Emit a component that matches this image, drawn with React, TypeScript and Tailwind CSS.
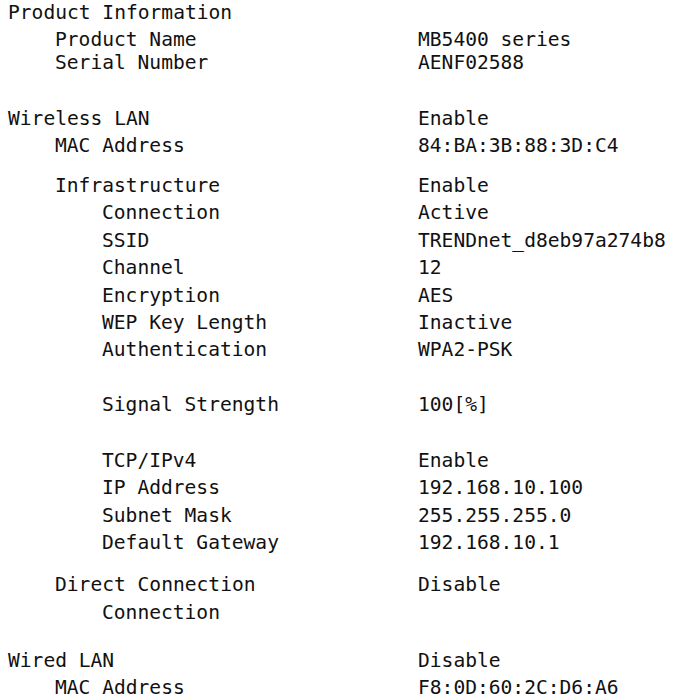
type Row = { label: string; value?: string; level: number; h: number };

// printed status sheet: label column + value column, heights = distance to next line
const rows: Row[] = [
  { label: "Product Information", level: 0, h: 27 },
  { label: "Product Name", value: "MB5400 series", level: 1, h: 23 },
  { label: "Serial Number", value: "AENF02588", level: 1, h: 56 },
  { label: "Wireless LAN", value: "Enable", level: 0, h: 27 },
  { label: "MAC Address", value: "84:BA:3B:88:3D:C4", level: 1, h: 40 },
  { label: "Infrastructure", value: "Enable", level: 1, h: 27 },
  { label: "Connection", value: "Active", level: 2, h: 28 },
  { label: "SSID", value: "TRENDnet_d8eb97a274b8", level: 2, h: 27 },
  { label: "Channel", value: "12", level: 2, h: 28 },
  { label: "Encryption", value: "AES", level: 2, h: 27 },
  { label: "WEP Key Length", value: "Inactive", level: 2, h: 27 },
  { label: "Authentication", value: "WPA2-PSK", level: 2, h: 55 },
  { label: "Signal Strength", value: "100[%]", level: 2, h: 56 },
  { label: "TCP/IPv4", value: "Enable", level: 2, h: 27 },
  { label: "IP Address", value: "192.168.10.100", level: 2, h: 28 },
  { label: "Subnet Mask", value: "255.255.255.0", level: 2, h: 27 },
  { label: "Default Gateway", value: "192.168.10.1", level: 2, h: 42 },
  { label: "Direct Connection", value: "Disable", level: 1, h: 28 },
  { label: "Connection", level: 2, h: 48 },
  { label: "Wired LAN", value: "Disable", level: 0, h: 27 },
  { label: "MAC Address", value: "F8:0D:60:2C:D6:A6", level: 1, h: 23 },
];

const indent = ["pl-0", "pl-[47px]", "pl-[94px]"];

export default function App() {
  return (
    <div className="min-h-screen w-[675px] h-[700px] overflow-hidden bg-white text-[#111] font-['DejaVu_Sans_Mono',monospace] text-[19.6px] leading-[22px] whitespace-pre">
      <div className="pl-2">
        {rows.map((r, i) => (
          <div key={i} className="grid grid-cols-[410px_1fr] pt-[2px]" style={{ height: r.h }}>
            <div className={indent[r.level]}>{r.label}</div>
            <div>{r.value ?? ""}</div>
          </div>
        ))}
      </div>
    </div>
  );
}
